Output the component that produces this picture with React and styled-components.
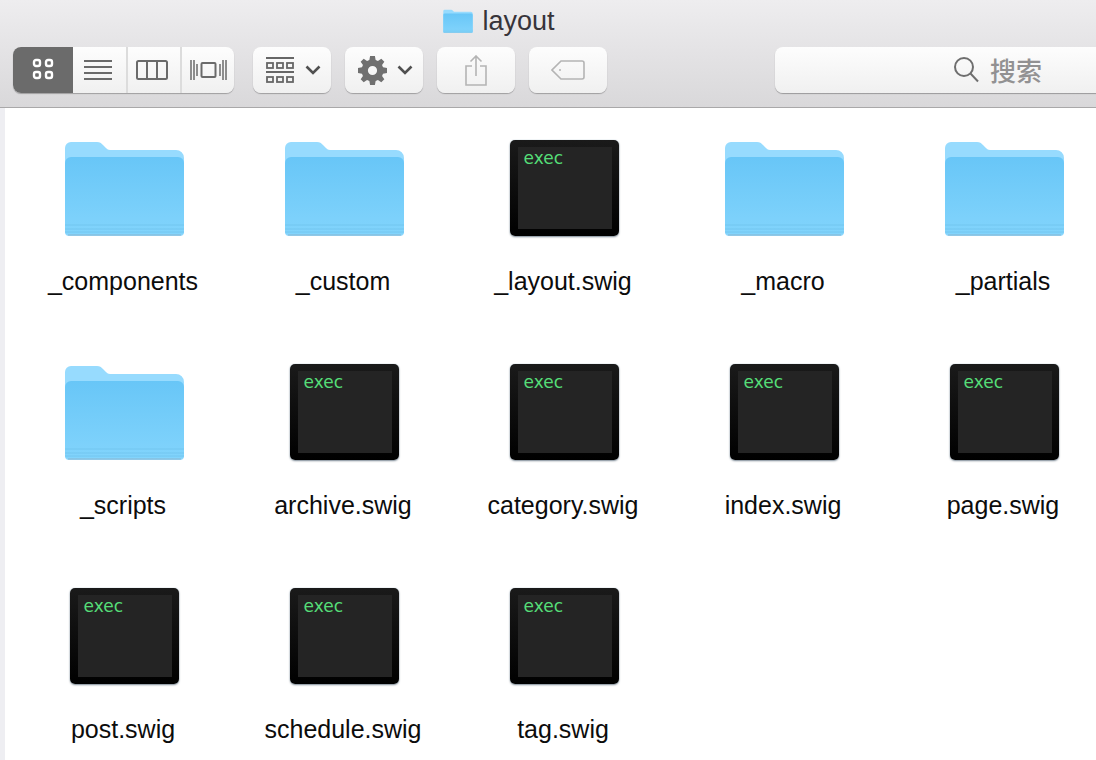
import React from 'react'
import styled, { createGlobalStyle } from 'styled-components'

const Global = createGlobalStyle`
  html, body {
    margin: 0;
    width: 1096px;
    height: 760px;
    overflow: hidden;
    background: #fff;
    font-family: "Liberation Sans", "Noto Sans CJK SC", sans-serif;
  }
`

const Window = styled.div`
  width: 1096px;
  height: 760px;
  display: flex;
  flex-direction: column;
  overflow: hidden;
`

// 상단 툴바
const Toolbar = styled.header`
  height: 107px;
  flex-shrink: 0;
  box-sizing: content-box;
  background: linear-gradient(#eeedef, #d9d8da);
  border-bottom: 1px solid #a9a8a9;
  display: flex;
  flex-direction: column;
`

const TitleRow = styled.div`
  height: 47px;
  display: flex;
  align-items: center;
  justify-content: center;
  gap: 9px;
  padding-right: 98px;
  padding-bottom: 5px;
  box-sizing: border-box;
`

const Title = styled.span`
  font-size: 27px;
  color: #37343a;
  line-height: 30px;
`

const Controls = styled.div`
  display: flex;
  align-items: flex-start;
  padding-left: 13px;
`

const Segmented = styled.div`
  display: flex;
  flex-shrink: 0;
  height: 46px;
  border-radius: 8px;
  overflow: hidden;
  background: linear-gradient(#fdfdfd, #f0f0f0);
  box-shadow: 0 1px 1px rgba(0, 0, 0, 0.28);
  margin-right: 19px;
`

const Segment = styled.div`
  width: ${p => p.$w}px;
  flex-shrink: 0;
  display: flex;
  align-items: center;
  justify-content: center;
  padding-right: ${p => p.$nudge || 0}px;
  background: ${p => (p.$active ? '#6b6b6b' : 'none')};
  border-left: ${p => (p.$divide ? '2px solid #dcdcdc' : 'none')};
  box-sizing: border-box;
`

const Button = styled.div`
  width: 78px;
  height: 46px;
  margin-right: 14px;
  flex-shrink: 0;
  border-radius: 8px;
  background: linear-gradient(#fdfdfd, #f0f0f0);
  box-shadow: 0 1px 1px rgba(0, 0, 0, 0.28);
  display: flex;
  align-items: center;
  justify-content: center;
  gap: ${p => p.$gap || 0}px;
  padding-left: ${p => p.$nudge || 0}px;
  box-sizing: border-box;
`

const Search = styled.div`
  width: 400px;
  height: 46px;
  margin-left: 154px;
  flex-shrink: 0;
  border-radius: 8px 0 0 8px;
  background: linear-gradient(#fdfdfd, #f0f0f0);
  box-shadow: 0 1px 1px rgba(0, 0, 0, 0.3);
  display: flex;
  align-items: center;
  padding-left: 179px;
  gap: 11px;
  box-sizing: border-box;
`

const SearchText = styled.span`
  font-size: 26px;
  font-weight: 500;
  color: #929192;
  font-family: "Noto Sans CJK SC", sans-serif;
  line-height: 30px;
`

const Body = styled.div`
  flex: 1;
  display: flex;
  min-height: 0;
`

const Strip = styled.div`
  width: 5px;
  flex-shrink: 0;
  background: #eeeef2;
  margin-right: 8px;
`

const Grid = styled.main`
  display: grid;
  grid-template-columns: repeat(5, 220px);
  grid-auto-rows: 224px;
  align-content: start;
  padding-top: 31px;
`

const Cell = styled.div`
  display: flex;
  flex-direction: column;
  align-items: center;
`

const IconBox = styled.div`
  height: 100px;
  padding-left: 2px;
  display: flex;
  align-items: flex-start;
  justify-content: center;
`

const Label = styled.div`
  margin-top: 27px;
  font-size: 25px;
  line-height: 30px;
  color: #0c0c0c;
  white-space: nowrap;
`

const ExecIcon = styled.div`
  width: 109px;
  height: 96px;
  margin-top: 1px;
  box-sizing: border-box;
  padding: 7px 7px 7px 8px;
  border-radius: 5px;
  background: linear-gradient(#1a1a1a, #000);
  box-shadow: 0 1px 2px rgba(20, 40, 60, 0.55), 0 0 1px rgba(120, 170, 200, 0.6);
`

const ExecScreen = styled.div`
  height: 100%;
  background: #242424;
  padding-left: 6px;
  font-family: "DejaVu Sans", sans-serif;
  font-size: 17px;
  line-height: 22px;
  color: #55dd77;
  box-sizing: border-box;
`

const Folder = ({ w = 119, h = 97 }) => (
  <svg width={w} height={h} viewBox="0 0 119 97">
    <defs>
      <linearGradient id="folderFront" x1="0" y1="0" x2="0" y2="1">
        <stop offset="0" stopColor="#68c6f7" />
        <stop offset="1" stopColor="#82d4fc" />
      </linearGradient>
    </defs>
    <path d="M0 9a6 6 0 0 1 6-6h26c3 0 4 1 6 3l3 3c2 2 3 2 6 2h64a8 8 0 0 1 8 8v74a4 4 0 0 1-4 4H4a4 4 0 0 1-4-4z" fill="#97dbfe" />
    <path d="M0 24a6 6 0 0 1 6-6h107a6 6 0 0 1 6 6v68a4 4 0 0 1-4 4H4a4 4 0 0 1-4-4z" fill="url(#folderFront)" />
    <path d="M0 86h119M0 90h119M0 93h119" stroke="#6fc2ec" strokeWidth="1" opacity="0.75" />
    <path d="M3 96h113" stroke="#8ab6cf" strokeWidth="1.2" />
  </svg>
)

const Exec = () => (
  <ExecIcon>
    <ExecScreen>exec</ExecScreen>
  </ExecIcon>
)

const GridIcon = () => (
  <svg width="22" height="24" viewBox="0 0 22 24" fill="none" stroke="#fff" strokeWidth="2.4">
    <rect x="2" y="2" width="6" height="6" rx="2" />
    <rect x="14" y="2" width="6" height="6" rx="2" />
    <rect x="2" y="14" width="6" height="6" rx="2" />
    <rect x="14" y="14" width="6" height="6" rx="2" />
  </svg>
)

const ListIcon = () => (
  <svg width="28" height="20" viewBox="0 0 28 20" stroke="#6a6a6a" strokeWidth="1.8">
    <path d="M0 1h28M0 7h28M0 13h28M0 19h28" />
  </svg>
)

const ColumnsIcon = () => (
  <svg width="32" height="20" viewBox="0 0 32 20" fill="none" stroke="#6a6a6a" strokeWidth="2">
    <rect x="1" y="1" width="30" height="18" rx="1.5" />
    <path d="M11 1v18M21 1v18" />
  </svg>
)

const CoverIcon = () => (
  <svg width="37" height="22" viewBox="0 0 37 22" fill="none" stroke="#6a6a6a" strokeWidth="1.5">
    <rect x="11.5" y="4" width="14" height="14" rx="1" strokeWidth="2" />
    <path d="M1 1v20M4 1v20M33 1v20M36 1v20M7 5v12M30 5v12" />
  </svg>
)

const ArrangeIcon = () => (
  <svg width="28" height="26" viewBox="0 0 28 26" fill="none" stroke="#666">
    <path d="M0 1h28M0 15h28" strokeWidth="1.8" />
    <g strokeWidth="1.8">
      <rect x="1" y="6" width="6" height="5" />
      <rect x="11" y="6" width="6" height="5" />
      <rect x="21" y="6" width="6" height="5" />
      <rect x="1" y="20" width="6" height="5" />
      <rect x="11" y="20" width="6" height="5" />
      <rect x="21" y="20" width="6" height="5" />
    </g>
  </svg>
)

const Chevron = () => (
  <svg width="16" height="10" viewBox="0 0 16 10" fill="none" stroke="#505050" strokeWidth="2.6">
    <path d="M1.500 1.500L8 8l6.500-6.500" />
  </svg>
)

const GearIcon = () => (
  <svg width="29" height="29" viewBox="0 0 24 24" fill="#707070">
    <path fillRule="evenodd" d="M10 0h4l.6 3.300 1.900.8 2.800-1.900 2.500 2.500-1.900 2.800.8 1.900L24 10v4l-3.300.6-.8 1.900 1.900 2.800-2.500 2.500-2.800-1.900-1.900.8L14 24h-4l-.6-3.300-1.900-.8-2.800 1.900-2.500-2.500 1.900-2.800-.8-1.900L0 14v-4l3.300-.6.8-1.900-1.900-2.800 2.500-2.500 2.800 1.900 1.900-.8zM12 8.200a3.800 3.800 0 1 0 0 7.600 3.800 3.800 0 0 0 0-7.600z" />
  </svg>
)

const ShareIcon = () => (
  <svg width="22" height="31" viewBox="0 0 22 31" fill="none" stroke="#b4b4b4" strokeWidth="1.6">
    <path d="M7 11H1v19h20V11h-6M11 21V1M5.500 6.500L11 1l5.500 5.500" />
  </svg>
)

const TagIcon = () => (
  <svg width="34" height="20" viewBox="0 0 34 20" fill="none" stroke="#b4b4b4" strokeWidth="1.6">
    <path d="M10 1h21a2 2 0 0 1 2 2v14a2 2 0 0 1-2 2H10L1 10z" />
    <circle cx="9" cy="10" r="1" fill="#b4b4b4" stroke="none" />
  </svg>
)

const SearchIcon = () => (
  <svg width="25" height="26" viewBox="0 0 25 26" fill="none" stroke="#6e6e6e" strokeWidth="2">
    <circle cx="10" cy="10" r="9" />
    <path d="M16.500 16.500l7.500 8" />
  </svg>
)

const files = [
  ['_components', 'folder'],
  ['_custom', 'folder'],
  ['_layout.swig', 'exec'],
  ['_macro', 'folder'],
  ['_partials', 'folder'],
  ['_scripts', 'folder'],
  ['archive.swig', 'exec'],
  ['category.swig', 'exec'],
  ['index.swig', 'exec'],
  ['page.swig', 'exec'],
  ['post.swig', 'exec'],
  ['schedule.swig', 'exec'],
  ['tag.swig', 'exec'],
]

const App = () => (
  <Window>
    <Global />
    <Toolbar>
      <TitleRow>
        <Folder w={30} h={24} />
        <Title>layout</Title>
      </TitleRow>
      <Controls>
        <Segmented>
          <Segment $w={60} $active><GridIcon /></Segment>
          <Segment $w={53} $nudge={3}><ListIcon /></Segment>
          <Segment $w={54} $divide $nudge={4}><ColumnsIcon /></Segment>
          <Segment $w={54} $divide><CoverIcon /></Segment>
        </Segmented>
        <Button $gap={11} $nudge={3}><ArrangeIcon /><Chevron /></Button>
        <Button $gap={10} $nudge={2}><GearIcon /><Chevron /></Button>
        <Button><ShareIcon /></Button>
        <Button><TagIcon /></Button>
        <Search>
          <SearchIcon />
          <SearchText>搜索</SearchText>
        </Search>
      </Controls>
    </Toolbar>
    <Body>
      <Strip />
      <Grid>
        {files.map(([name, kind]) => (
          <Cell key={name}>
            <IconBox>{kind === 'folder' ? <Folder /> : <Exec />}</IconBox>
            <Label>{name}</Label>
          </Cell>
        ))}
      </Grid>
    </Body>
  </Window>
)

export default App
